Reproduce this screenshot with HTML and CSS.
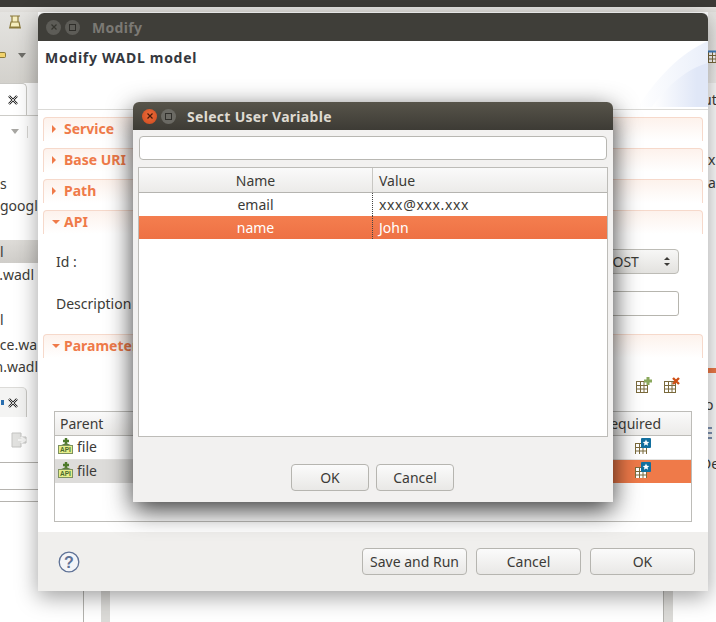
FILE: index.html
```html
<!DOCTYPE html>
<html lang="en">
<head>
<meta charset="utf-8">
<title>Select User Variable</title>
<link rel="stylesheet" href="styles.css">
</head>
<body>
<svg class="defs" width="0" height="0" aria-hidden="true">
  <defs>
    <g id="grid">
      <rect x="0.5" y="0.5" width="11" height="11" fill="#fff" stroke="#7a6a3c"/>
      <path d="M0 4.5h12M0 8h12M4.5 0v12M8 0v12" stroke="#7a6a3c" fill="none"/>
    </g>
    <g id="req">
      <use href="#grid" y="5"/>
      <rect x="6" y="0" width="10" height="10" rx="1" fill="#126f9e"/>
      <path d="M11 1.6l1 2.2 2.3.2-1.8 1.5.6 2.3-2.1-1.2-2.1 1.2.6-2.3-1.8-1.5 2.3-.2z" fill="#fff"/>
    </g>
    <g id="api">
      <path d="M8 0v6M5 3h6" stroke="#4e7a2c" stroke-width="2.4" fill="none"/>
      <path d="M1 8l7-3 7 3z" fill="#5c7f3c"/>
      <rect x="0.5" y="7.5" width="14" height="8" fill="#e6ee8a" stroke="#7d9160"/>
      <text x="7.5" y="14" class="api-text" text-anchor="middle">API</text>
    </g>
    <g id="closeglyph">
      <path d="M-2.5-2.5l5 5M2.5-2.5l-5 5" stroke-width="1.2" fill="none"/>
    </g>
  </defs>
</svg>

<div class="desk">
  <div class="top-strip"></div>

  <aside class="side side-left">
    <div class="tool">
      <svg class="tool-icon" width="14" height="15" viewBox="0 0 14 15"><path d="M2 1h10M4 1v6h6V1M3 7h8l1 5H2zM1 13h12" fill="#f6eebf" stroke="#8b7a3a" stroke-width="1.2"/></svg>
      <div class="tool-row">
        <span class="tool-yellow"></span>
        <span class="arrow-down"></span>
      </div>
    </div>
    <div class="tab"><svg width="10" height="10" viewBox="0 0 10 10"><path d="M1 1l8 8M9 1l-8 8" stroke="#222" stroke-width="2.4"/><path d="M1 1l8 8M9 1l-8 8" stroke="#fff" stroke-width="0.8"/></svg></div>
    <div class="pane-tools"><span class="arrow-down arrow-light"></span><span class="tick"></span></div>
    <div class="tree tree-a">
      <div class="tree-row">s</div>
      <div class="tree-row">google</div>
    </div>
    <div class="tree-head">l</div>
    <div class="tree tree-b">
      <div class="tree-row tree-row-clip">.wadl</div>
      <div class="tree-row tree-gap">l</div>
      <div class="tree-row tree-row-clip tree-ce">ce.wa</div>
      <div class="tree-row tree-row-clip tree-n">n.wadl</div>
    </div>
    <div class="tab tab-low"><span class="dot"></span><svg width="10" height="10" viewBox="0 0 10 10"><path d="M1 1l8 8M9 1l-8 8" stroke="#222" stroke-width="2.4"/><path d="M1 1l8 8M9 1l-8 8" stroke="#fff" stroke-width="0.8"/></svg></div>
    <div class="low-tools"><svg width="16" height="16" viewBox="0 0 16 16"><path d="M1 1h9v4h5v6h-5v4H1z" fill="#e2e2e0" stroke="#c4c4c2"/><path d="M7 8h5M10 5l4 3-4 3" stroke="#f4f4f3" stroke-width="2" fill="none"/></svg></div>
    <div class="low-line low-line-a"></div>
    <div class="low-line low-line-b"></div>
    <div class="low-line low-line-c"></div>
  </aside>

  <aside class="side side-right">
    <div class="tool tool-r"><svg width="14" height="14" viewBox="0 0 14 14"><use href="#grid" y="1"/><path d="M0 1.5h12" stroke="#3f7fc0" stroke-width="2"/></svg></div>
    <div class="r-text r-ut">ut</div>
    <div class="r-text r-x">x</div>
    <div class="r-text r-a">a</div>
    <div class="r-orange"></div>
    <div class="r-text r-o">o</div>
    <svg class="r-icon" width="8" height="16" viewBox="0 0 8 16"><path d="M0 3h4M0 8h4M0 13h4" stroke="#7f94b4" stroke-width="2"/></svg>
    <div class="r-text r-de">De</div>
  </aside>

  <div class="bottom-frame">
    <span class="vline"></span>
    <span class="vbar"></span>
    <span class="vbar vbar-r"></span>
  </div>

  <section class="window modify">
    <header class="titlebar">
      <span class="wbtn wbtn-off"><svg width="8" height="8" viewBox="-4 -4 8 8"><use href="#closeglyph" stroke="#36352f"/></svg></span>
      <span class="wbtn wbtn-off"><span class="max-glyph"></span></span>
      <h1 class="title title-off">Modify</h1>
    </header>
    <div class="banner">
      <h2 class="banner-title">Modify WADL model</h2>
      <svg class="banner-art" width="70" height="66" viewBox="0 0 70 66" preserveAspectRatio="none">
        <defs>
          <linearGradient id="fade" x1="0" x2="1" y1="0" y2="0">
            <stop offset="0" stop-color="#fff"/>
            <stop offset="1" stop-color="#eaeffa"/>
          </linearGradient>
          <linearGradient id="fade2" x1="0" x2="1" y1="0" y2="0">
            <stop offset="0" stop-color="#fff"/>
            <stop offset="0.8" stop-color="#e0e7f7"/>
          </linearGradient>
        </defs>
        <path d="M0 66C18 38 42 12 70 0V66z" fill="url(#fade)"/>
        <path d="M14 66C28 46 48 28 70 22V66z" fill="url(#fade2)"/>
      </svg>
    </div>
    <div class="form">
      <div class="sec"><span class="caret-right"></span>Service</div>
      <div class="sec"><span class="caret-right"></span>Base URI</div>
      <div class="sec"><span class="caret-right"></span>Path</div>
      <div class="sec sec-open"><span class="caret-down"></span>API</div>
      <div class="field-row field-id">
        <label class="field-label">Id :</label>
        <div class="combo"><span>POST</span><span class="spin"><i class="spin-up"></i><i class="spin-down"></i></span></div>
      </div>
      <div class="field-row field-desc">
        <label class="field-label">Description</label>
        <div class="text-input"></div>
      </div>
      <div class="sec sec-open sec-params"><span class="caret-down"></span>Parameters</div>
      <div class="param-tools">
        <svg width="17" height="17" viewBox="0 0 17 17"><use href="#grid" y="5"/><path d="M12 1v8M8 5h8" stroke="#8aa85c" stroke-width="3"/></svg>
        <svg width="17" height="17" viewBox="0 0 17 17"><use href="#grid" y="5"/><path d="M9 2l6 6M15 2l-6 6" stroke="#cf4f14" stroke-width="2.4"/></svg>
      </div>
      <div class="ptable">
        <div class="phead"><span class="pcol-parent">Parent</span><span class="pcol-req">Required</span></div>
        <div class="prow">
          <span class="pcol-parent"><svg width="16" height="16" viewBox="0 0 16 16"><use href="#api"/></svg>file</span>
          <span class="pcol-req"><svg width="16" height="16" viewBox="0 0 16 16"><use href="#req"/></svg></span>
        </div>
        <div class="prow prow-sel">
          <span class="pcol-parent"><svg width="16" height="16" viewBox="0 0 16 16"><use href="#api"/></svg>file</span>
          <span class="pcol-req"><svg width="16" height="16" viewBox="0 0 16 16"><use href="#req"/></svg></span>
        </div>
      </div>
    </div>
    <footer class="footer">
      <svg class="help" width="22" height="22" viewBox="0 0 22 22"><circle cx="11" cy="11" r="9.8" fill="#f4f5f8" stroke="#5f7296" stroke-width="1.3"/><text x="11" y="16.5" class="help-text" text-anchor="middle">?</text></svg>
      <div class="btns">
        <button class="btn btn-wide">Save and Run</button>
        <button class="btn btn-wide">Cancel</button>
        <button class="btn btn-wide">OK</button>
      </div>
    </footer>
  </section>

  <section class="window dialog">
    <header class="titlebar titlebar-dlg">
      <span class="wbtn wbtn-close"><svg width="8" height="8" viewBox="-4 -4 8 8"><use href="#closeglyph" stroke="#4a1a08"/></svg></span>
      <span class="wbtn wbtn-max"><span class="max-glyph"></span></span>
      <h1 class="title">Select User Variable</h1>
    </header>
    <div class="dlg-body">
      <div class="search"></div>
      <div class="vtable">
        <div class="vhead"><span class="vname">Name</span><span class="vvalue">Value</span></div>
        <div class="vrow"><span class="vname">email</span><span class="vvalue vvalue-wide">xxx@xxx.xxx</span></div>
        <div class="vrow vrow-sel"><span class="vname">name</span><span class="vvalue">John</span></div>
      </div>
      <div class="dlg-btns">
        <button class="btn">OK</button>
        <button class="btn">Cancel</button>
      </div>
    </div>
  </section>
</div>
</body>
</html>
```

FILE: styles.css
```css
* { box-sizing: border-box; }
html, body { margin: 0; padding: 0; }
body {
  width: 716px;
  height: 622px;
  overflow: hidden;
  background: #fff;
  font-family: "Noto Sans", "Open Sans", sans-serif;
  font-size: 14px;
  color: #3c3b37;
}
.defs { position: absolute; }
.desk { position: relative; width: 716px; height: 622px; overflow: hidden; background: #fff; }
.top-strip {
  height: 12px;
  background: linear-gradient(#3c3b37 0, #3c3b37 7px, #e6e5e2 7px, #dedcd8 12px);
}

.side { position: absolute; top: 12px; overflow: hidden; }
.side-left { left: 0; width: 38px; height: 610px; }
.side-right { left: 708px; width: 8px; height: 610px; }

.tool { height: 71px; background: linear-gradient(#e5e4e1, #d3d1cc); padding: 3px 0 0 8px; position: relative; }
.tool-icon { display: block; }
.tool-row { display: flex; align-items: center; gap: 12px; margin: 22px 0 0 -8px; }
.tool-yellow { width: 6px; height: 6px; background: #f1d26c; border: 1px solid #8b7a3a; border-left: 0; border-radius: 0 2px 2px 0; }
.arrow-down { width: 0; height: 0; border-left: 4px solid transparent; border-right: 4px solid transparent; border-top: 5px solid #6f6e69; }
.arrow-light { border-top-color: #a8a7a3; }

.tab {
  height: 32px; width: 27px;
  background: #fff;
  border: 1px solid #c9c8c4; border-left: 0; border-bottom: 0;
  border-radius: 0 5px 0 0;
  display: flex; align-items: center; justify-content: flex-end;
  padding: 0 8px 0 0;
}
.pane-tools { height: 40px; border-top: 1px solid #cdccc8; display: flex; align-items: center; padding: 0 0 8px 11px; gap: 8px; position: relative; }
.tick { width: 1px; height: 12px; background: #d8d7d4; }

.tree { font-size: 14px; line-height: 22px; color: #3c3b37; }
.tree-a { padding-top: 18px; height: 85px; }
.tree-row { height: 22px; white-space: nowrap; }
.tree-row-clip { display: flex; justify-content: flex-end; padding-right: 4px; }
.tree-ce { margin-top: 3px; padding-right: 1px; }
.tree-n { padding-right: 0; }
.tree-head { height: 23px; background: linear-gradient(#dedcd8, #cfcdc9); line-height: 23px; font-size: 14px; }
.tree-b { padding-top: 1px; height: 124px; }
.tree-gap { margin: 23px 0 0 0; }
.tree-b .tree-row { height: 22px; }
.tab-low { height: 30px; background: #f4f4f3; border-top: 1px solid #dcdbd8; gap: 4px; padding-right: 8px; }
.dot { width: 3px; height: 5px; background: #2a6fb0; margin-left: -2px; }
.low-tools { height: 45px; padding: 15px 0 0 11px; }
.low-line { height: 1px; background: #b5b3af; }
.low-line-a { margin-top: 0; }
.low-line-b { margin-top: 26px; }
.low-line-c { margin-top: 11px; }

.tool-r { padding: 37px 0 0 0; background: linear-gradient(#e5e4e1, #f2f1ef); }
.r-text { font-size: 14px; line-height: 20px; white-space: nowrap; color: #3c3b37; }
.r-ut { margin: 7px 0 0 -5px; }
.r-x { margin-top: 40px; }
.r-a { margin-top: 3px; }
.r-orange { height: 5px; background: #ef7a49; margin-top: 175px; }
.r-o { margin: 22px 0 0 -3px; }
.r-icon { display: block; margin-top: 10px; }
.r-de { margin: 13px 0 0 -7px; }

.bottom-frame {
  position: absolute; left: 83px; top: 591px; width: 590px; height: 31px;
  display: flex; align-items: stretch;
}
.vline { width: 1px; background: #b3b2ae; margin-right: 17px; }
.vbar { width: 9px; background: #dcdbd8; }
.vbar-r { margin-left: auto; width: 10px; border-left: 1px solid #b3b2ae; }

.window { position: absolute; display: flex; flex-direction: column; }
.modify {
  left: 38px; top: 13px; width: 670px; height: 578px;
  background: #fff;
  border-radius: 6px 6px 0 0;
  box-shadow: 0 6px 22px rgba(0,0,0,.38);
}
.dialog {
  left: 133px; top: 102px; width: 480px; height: 400px;
  background: #f2f1f0;
  border-radius: 6px 6px 0 0;
  box-shadow: 0 8px 26px rgba(0,0,0,.78);
}
.titlebar {
  height: 28px; flex: none;
  background: #3f3e39;
  border-radius: 6px 6px 0 0;
  display: flex; align-items: center;
  padding-left: 8px;
}
.titlebar-dlg { background: linear-gradient(#57544a, #3d3b35); padding-left: 9px; }
.wbtn {
  width: 15px; height: 15px; border-radius: 50%;
  display: flex; align-items: center; justify-content: center;
  margin-right: 4px;
}
.wbtn-off { background: #5d5c57; }
.wbtn-close { background: radial-gradient(circle at 50% 40%, #ee6b3a, #cc4a1e); }
.wbtn-max { background: #6b6a64; }
.max-glyph { width: 7px; height: 7px; border: 1px solid #2f2e2a; }
.title { margin: 0 0 0 7px; font-size: 14px; font-weight: 700; color: #dfdbd2; letter-spacing: .3px; }
.title-off { color: #7b7974; margin-left: 8px; }

.banner { height: 69px; flex: none; position: relative; padding: 7px 7px; border-bottom: 1px solid #dbdad7; }
.banner-title { margin: 0; font-size: 14px; line-height: 20px; font-weight: 700; color: #35383e; letter-spacing: .7px; }
.banner-art { position: absolute; right: 0; top: 0; }

.form { flex: 1; padding: 7px 5px 0; display: flex; flex-direction: column; align-items: stretch; min-height: 0; }
.sec {
  height: 24px; flex: none;
  margin-bottom: 7px;
  border: 1px solid #f6d9cb; border-bottom: 0;
  border-radius: 4px 4px 0 0;
  background: linear-gradient(#fdf2ec, #fff);
  color: #ef7a49;
  font-weight: 700; font-size: 14px; line-height: 22px;
  padding: 0 0 2px 8px;
  display: flex; align-items: center;
}
.caret-right { width: 0; height: 0; border-top: 4px solid transparent; border-bottom: 4px solid transparent; border-left: 4px solid #ef7a49; margin: 0 8px 0 0; }
.caret-down { width: 0; height: 0; border-left: 4px solid transparent; border-right: 4px solid transparent; border-top: 4px solid #ef7a49; margin: 0 4px 0 0; }
.sec-open { margin-bottom: 0; }

.field-row { display: flex; align-items: center; height: 25px; padding: 0 24px 0 13px; flex: none; }
.field-id { margin-top: 15px; }
.field-desc { margin-top: 17px; }
.field-label { width: 80px; font-size: 14px; color: #3c3b37; flex: none; }
.combo {
  margin-left: auto; width: 84px; height: 25px;
  display: flex; align-items: center; justify-content: space-between;
  padding: 0 8px 0 8px;
  border: 1px solid #bdbcb6; border-radius: 4px;
  background: linear-gradient(#f7f7f6, #e3e2df);
  font-size: 14px; color: #3c3b37;
}
.spin { display: flex; flex-direction: column; gap: 3px; }
.spin-up { width: 0; height: 0; border-left: 3px solid transparent; border-right: 3px solid transparent; border-bottom: 3px solid #3c3b37; }
.spin-down { width: 0; height: 0; border-left: 3px solid transparent; border-right: 3px solid transparent; border-top: 3px solid #3c3b37; }
.text-input { flex: 1; height: 25px; background: #fff; border: 1px solid #b6b5ae; border-radius: 3px; }
.sec-params { margin-top: 18px; }

.param-tools { display: flex; justify-content: flex-end; gap: 11px; padding: 18px 22px 0 0; height: 53px; flex: none; }
.ptable { margin: 0 11px 0 11px; height: 111px; flex: none; border: 1px solid #bdbcb8; display: flex; flex-direction: column; }
.phead {
  height: 24px; flex: none;
  display: flex; align-items: center; justify-content: space-between;
  background: linear-gradient(#fafafa, #ecebe9);
  border-bottom: 1px solid #bdbcb8;
  padding: 0 30px 0 5px;
  font-size: 14px;
}
.prow { height: 24px; flex: none; display: flex; align-items: center; justify-content: space-between; padding: 0 40px 3px 3px; border-bottom: 1px solid #e3e2e0; font-size: 14px; }
.prow .pcol-parent { display: flex; align-items: center; gap: 3px; }
.prow-sel { height: 23px; border-bottom: 0; background: linear-gradient(90deg, #dddcda 0, #dddcda 80px, #ef7a49 80px); }
.pcol-req { display: block; }
.prow .pcol-req svg, .prow .pcol-parent svg { display: block; }
.api-text { font-family: "Liberation Sans", sans-serif; font-size: 6.5px; font-weight: 700; fill: #4a6a30; }
.help-text { font-family: "Liberation Sans", sans-serif; font-size: 16px; font-weight: 700; fill: #5f7296; }

.footer {
  height: 59px; flex: none; margin-top: auto;
  background: #f0efed;
  display: flex; align-items: center; justify-content: space-between;
  padding: 0 13px 0 20px;
}
.help { display: block; }
.btns { display: flex; gap: 9px; }
.btn {
  width: 78px; height: 27px;
  border: 1px solid #b6b5b0; border-radius: 4px;
  background: linear-gradient(#fbfbfb, #e9e8e6);
  font-family: inherit; font-size: 14px; color: #3c3b37;
  padding: 0;
}
.btn-wide { width: 105px; }

.dlg-body { flex: 1; display: flex; flex-direction: column; padding: 6px 5px 0; min-height: 0; }
.search { height: 24px; flex: none; margin: 0 1px; background: #fff; border: 1px solid #b8b7b2; border-radius: 4px; }
.vtable { height: 270px; flex: none; margin-top: 7px; background: #fff; border: 1px solid #bdbcb8; display: flex; flex-direction: column; }
.vhead { height: 25px; flex: none; display: flex; background: linear-gradient(#fafafa, #ecebe9); border-bottom: 1px solid #b5b4b0; line-height: 26px; }
.vhead .vvalue { border-left: 1px solid #c8c7c3; }
.vrow { height: 23px; flex: none; display: flex; line-height: 23px; }
.vrow .vvalue { border-left: 1px dotted #444; }
.vname { width: 233px; text-align: center; flex: none; }
.vvalue { flex: 1; padding-left: 6px; }
.vvalue-wide { letter-spacing: .65px; }
.vrow-sel { background: linear-gradient(#f47e4f, #ee7144); color: #fff; }
.dlg-btns { display: flex; gap: 7px; justify-content: flex-start; padding: 27px 0 0 153px; }
```
